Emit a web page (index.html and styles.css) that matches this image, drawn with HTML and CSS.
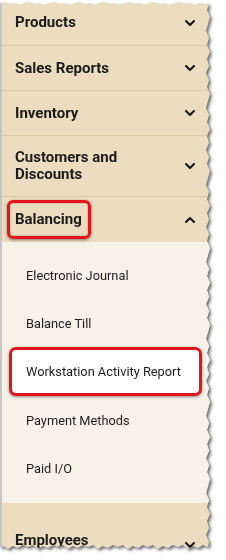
FILE: index.html
```html
<!DOCTYPE html>
<html>
<head>
<meta charset="utf-8">
<link rel="stylesheet" href="styles.css">
</head>
<body>
<div class="frame">
  <nav class="panel">
    <div class="head"><span class="label">Products</span><svg class="chev" viewBox="0 0 10 6"><polyline points="1,1 5,5 9,1"/></svg></div>
    <div class="head"><span class="label">Sales Reports</span><svg class="chev" viewBox="0 0 10 6"><polyline points="1,1 5,5 9,1"/></svg></div>
    <div class="head"><span class="label">Inventory</span><svg class="chev" viewBox="0 0 10 6"><polyline points="1,1 5,5 9,1"/></svg></div>
    <div class="head tall"><span class="label wrap">Customers and Discounts</span><svg class="chev" viewBox="0 0 10 6"><polyline points="1,1 5,5 9,1"/></svg></div>
    <div class="head open"><span class="label boxed">Balancing</span><svg class="chev" viewBox="0 0 10 6"><polyline points="1,5 5,1 9,5"/></svg></div>
    <ul class="sub">
      <li class="item">Electronic Journal</li>
      <li class="item">Balance Till</li>
      <li class="item active">Workstation Activity Report</li>
      <li class="item">Payment Methods</li>
      <li class="item">Paid I/O</li>
    </ul>
    <div class="head last"><span class="label">Employees</span><svg class="chev" viewBox="0 0 10 6"><polyline points="1,1 5,5 9,1"/></svg></div>
  </nav>
</div>
</body>
</html>
```

FILE: styles.css
```css
html, body {
  margin: 0;
  padding: 0;
  background: #ffffff;
}

.frame {
  width: 216px;
  height: 560px;
  filter: drop-shadow(2px 2px 1.5px rgba(0, 0, 0, 0.55));
}

.panel {
  width: 208px;
  height: 550px;
  background: #ecdcc0;
  border-left: 2px solid #c6c6c6;
  overflow: hidden;
  font-family: Roboto, "Liberation Sans", sans-serif;
  color: #1b1b1b;
  clip-path: polygon(
    0 3px, 5px 2px, 9px 4px, 14px 3px, 19px 5px, 24px 3px, 29px 2px, 34px 4px, 39px 3px, 44px 5px,
    49px 3px, 54px 2px, 59px 4px, 64px 3px, 69px 5px, 74px 3px, 79px 2px, 84px 4px, 89px 3px, 94px 5px,
    99px 3px, 104px 2px, 109px 4px, 114px 3px, 119px 5px, 124px 3px, 129px 2px, 134px 4px, 139px 3px,
    144px 5px, 149px 3px, 154px 2px, 159px 4px, 164px 3px, 169px 5px, 174px 3px, 179px 2px, 184px 4px,
    189px 3px, 194px 5px, 199px 3px, 204px 4px, 209px 3px,
    207px 10px, 210px 17px, 208px 24px, 206px 31px, 209px 38px, 207px 45px, 210px 52px, 207px 59px,
    209px 66px, 206px 73px, 209px 80px, 207px 87px, 210px 94px, 208px 101px, 206px 108px, 209px 115px,
    207px 122px, 210px 129px, 207px 136px, 209px 143px, 206px 150px, 209px 157px, 207px 164px,
    210px 171px, 208px 178px, 206px 185px, 209px 192px, 207px 199px, 210px 206px, 207px 213px,
    209px 220px, 206px 227px, 209px 234px, 207px 241px, 210px 248px, 208px 255px, 206px 262px,
    209px 269px, 207px 276px, 210px 283px, 207px 290px, 209px 297px, 206px 304px, 209px 311px,
    207px 318px, 210px 325px, 208px 332px, 206px 339px, 209px 346px, 207px 353px, 210px 360px,
    207px 367px, 209px 374px, 206px 381px, 209px 388px, 207px 395px, 210px 402px, 208px 409px,
    206px 416px, 209px 423px, 207px 430px, 210px 437px, 207px 444px, 209px 451px, 206px 458px,
    209px 465px, 207px 472px, 210px 479px, 208px 486px, 206px 493px, 209px 500px, 207px 507px,
    210px 514px, 207px 521px, 209px 528px, 206px 535px, 209px 542px, 208px 547px,
    203px 545px, 198px 548px, 193px 546px, 188px 549px, 183px 545px, 178px 547px, 173px 545px,
    168px 548px, 163px 546px, 158px 549px, 153px 545px, 148px 547px, 143px 545px, 138px 548px,
    133px 546px, 128px 549px, 123px 545px, 118px 547px, 113px 545px, 108px 548px, 103px 546px,
    98px 549px, 93px 545px, 88px 547px, 83px 545px, 78px 548px, 73px 546px, 68px 549px, 63px 545px,
    58px 547px, 53px 545px, 48px 548px, 43px 546px, 38px 549px, 33px 545px, 28px 547px, 23px 545px,
    18px 548px, 13px 546px, 8px 549px, 3px 546px, 0 548px
  );
}

.head {
  display: flex;
  align-items: center;
  justify-content: space-between;
  height: 44px;
  padding: 0 13px 0 13px;
  border-bottom: 1px solid #dccaa8;
  box-sizing: content-box;
}

.head:first-child {
  height: 45px;
}

.head.tall {
  height: auto;
  padding-top: 13px;
  padding-bottom: 13px;
}

.head.open {
  border-bottom: none;
  height: 45px;
}

.head.last {
  border-bottom: none;
  align-items: flex-start;
  height: 60px;
  padding-top: 29px;
}

.label {
  font-size: 15px;
  font-weight: 700;
  line-height: 17px;
}

.label.wrap {
  max-width: 140px;
}

.label.boxed {
  margin-left: -8px;
  padding: 8px 6px 8px 5px;
  border: 3px solid #e3141c;
  border-radius: 6px;
  box-shadow: 0 1px 3px rgba(0, 0, 0, 0.45), inset 0 0 2px rgba(0, 0, 0, 0.35);
}

.chev {
  width: 10px;
  height: 6px;
  margin-right: 2px;
  fill: none;
  stroke: #111;
  stroke-width: 2;
  stroke-linecap: round;
  stroke-linejoin: round;
}

.head.last .chev {
  margin-top: 10px;
}

.sub {
  list-style: none;
  margin: 0;
  padding: 9px 0 11px 0;
  background: #f7f2e8;
}

.item {
  display: flex;
  align-items: center;
  height: 48px;
  padding-left: 24px;
  font-size: 12.8px;
  color: #1e1e1e;
}

.item.active {
  height: 43px;
  margin: 0 8px 0 7px;
  padding-left: 14px;
  background: #ffffff;
  border: 3px solid #e3141c;
  border-radius: 7px;
  box-shadow: 0 1px 3px rgba(0, 0, 0, 0.45);
}
```
